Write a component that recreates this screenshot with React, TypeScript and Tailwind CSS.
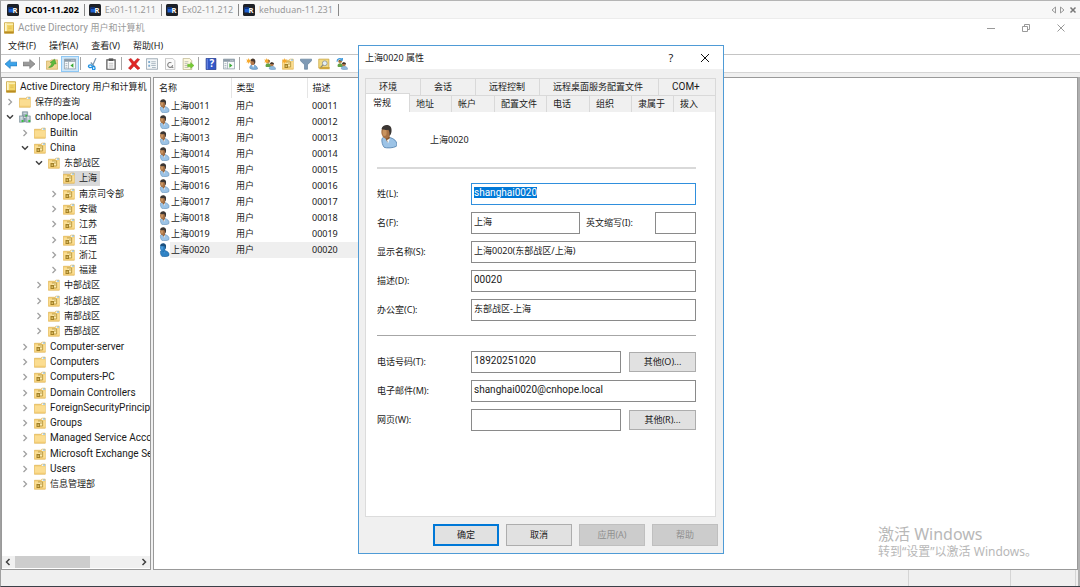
import { useEffect, useRef, type ReactNode } from 'react'
import clsx from 'clsx'

type NodeKind = 'console' | 'folder' | 'domain' | 'ou'

const TREE: { label: string; level: number; kind: NodeKind; open?: boolean; leaf?: boolean; selected?: boolean }[] = [
  { label: 'Active Directory 用户和计算机', level: 0, kind: 'console', leaf: true },
  { label: '保存的查询', level: 1, kind: 'folder' },
  { label: 'cnhope.local', level: 1, kind: 'domain', open: true },
  { label: 'Builtin', level: 2, kind: 'folder' },
  { label: 'China', level: 2, kind: 'ou', open: true },
  { label: '东部战区', level: 3, kind: 'ou', open: true },
  { label: '上海', level: 4, kind: 'ou', leaf: true, selected: true },
  { label: '南京司令部', level: 4, kind: 'ou' },
  { label: '安徽', level: 4, kind: 'ou' },
  { label: '江苏', level: 4, kind: 'ou' },
  { label: '江西', level: 4, kind: 'ou' },
  { label: '浙江', level: 4, kind: 'ou' },
  { label: '福建', level: 4, kind: 'ou' },
  { label: '中部战区', level: 3, kind: 'ou' },
  { label: '北部战区', level: 3, kind: 'ou' },
  { label: '南部战区', level: 3, kind: 'ou' },
  { label: '西部战区', level: 3, kind: 'ou' },
  { label: 'Computer-server', level: 2, kind: 'ou' },
  { label: 'Computers', level: 2, kind: 'folder' },
  { label: 'Computers-PC', level: 2, kind: 'ou' },
  { label: 'Domain Controllers', level: 2, kind: 'ou' },
  { label: 'ForeignSecurityPrincipals', level: 2, kind: 'folder' },
  { label: 'Groups', level: 2, kind: 'ou' },
  { label: 'Managed Service Accounts', level: 2, kind: 'folder' },
  { label: 'Microsoft Exchange Security Groups', level: 2, kind: 'ou' },
  { label: 'Users', level: 2, kind: 'folder' },
  { label: '信息管理部', level: 2, kind: 'ou' },
]

const INDENT = ['pl-[3px]', 'pl-[2px]', 'pl-[17px]', 'pl-[31px]', 'pl-[46px]']

const USERS = ['0011', '0012', '0013', '0014', '0015', '0016', '0017', '0018', '0019', '0020']

const SESSIONS = ['DC01-11.202', 'Ex01-11.211', 'Ex02-11.212', 'kehuduan-11.231']

const MENUS = ['文件(F)', '操作(A)', '查看(V)', '帮助(H)']

const TABS_BACK = [
  { label: '环境', width: 'w-[55px]' },
  { label: '会话', width: 'w-[55px]' },
  { label: '远程控制', width: 'w-[64px]' },
  { label: '远程桌面服务配置文件', width: 'w-[119px]' },
  { label: 'COM+', width: 'flex-1' },
]

const TABS_FRONT = [
  { label: '地址', width: 'w-[42px]' },
  { label: '帐户', width: 'w-[43px]' },
  { label: '配置文件', width: 'w-[52px]' },
  { label: '电话', width: 'w-[43px]' },
  { label: '组织', width: 'w-[42px]' },
  { label: '隶属于', width: 'w-[42px]' },
  { label: '拨入', width: 'flex-1' },
]

const LATIN = 'font-[Roboto,sans-serif] text-[10px]'

// Latin runs are set a size up from the Chinese text beside them
function Mixed({ text }: { text: string }) {
  const cut = text.search(/[\u4e00-\u9fff]/)
  if (cut === 0) return <span>{text}</span>
  if (cut < 0) return <span className={LATIN}>{text}</span>
  return (
    <span className="whitespace-pre">
      <span className={LATIN}>{text.slice(0, cut)}</span>
      {text.slice(cut)}
    </span>
  )
}

function Icon({ children, className = 'size-3' }: { children: ReactNode; className?: string }) {
  return (
    <svg viewBox="0 0 16 16" className={clsx('shrink-0', className)} aria-hidden="true">
      {children}
    </svg>
  )
}

const Scroll = () => (
  <>
    <path d="M2 1h12v14H2z" fill="#f3d66a" stroke="#c19a2e" />
    <path d="M2.500 1.500h2.500v11H2.500z" fill="#fdf6cf" />
    <path d="M5 2h8.500v2H5z" fill="#fbeeb0" />
    <path d="M2 12.500h12V15H2z" fill="#b98c22" />
    <path d="M7 6.500h4.500M7 8.500h4.500" stroke="#e0bd4c" />
  </>
)

const Folder = () => (
  <>
    <path d="M.5 3H9l1.500-1.500h4.500V15H.5z" fill="#f2c766" stroke="#dcae4e" strokeWidth=".8" />
    <path d="M10.300 2h4.300v2h-4.300z" fill="#f1f6f8" />
    <path d="M12.300 2h2.300v1.200h-2.300z" fill="#5fa3cf" />
    <path d="M1 4.500h14v9.800H1z" fill="#fbdd91" />
    <path d="M1 13h14v1.500H1z" fill="#f2cb72" />
  </>
)

const OuFolder = () => (
  <>
    <Folder />
    <path d="M5.300 5.300h6.200V12H8" fill="#fdebb0" stroke="#b8963c" strokeWidth="1.200" />
    <path d="M3.300 8H8v5.300H3.300z" fill="#a17f26" />
    <path d="M4.600 10h2.200v1.600H4.600z" fill="#f5d982" />
    <path d="M8 8h2.500" stroke="#b8963c" strokeWidth="1.200" />
  </>
)

const Domain = () => (
  <>
    <path d="M4.500 1h7v6.500h-7z" fill="#9fb1bd" stroke="#70858f" strokeWidth=".8" />
    <path d="M.5 6.500H6V15H.5zM9.500 6.500H15V15H9.500z" fill="#b4c3cc" stroke="#70858f" strokeWidth=".8" />
    <path d="M6 3h4M2 8.500h2.500M11 8.500h2.500M2 10.500h2.500M11 10.500h2.500" stroke="#eef4f6" />
    <path d="M6.500 9h2.500v6H6.500z" fill="#7d929f" />
    <path d="M3.500 12h2.500v2.500H3.500zM12.500 12h2.500v2.500h-2.500zM8.500 5h2.300v2.300H8.500z" fill="#35c23c" />
  </>
)

function UserIcon({ className, active = false }: { className?: string; active?: boolean }) {
  return (
    <svg viewBox="0 0 18 24" className={clsx('shrink-0', className)} aria-hidden="true">
      <path
        d="M3 14c2-2 4-2 6-1.400 3 .5 7 2 8.300 4.900.5 1.700.4 3.600 0 4.300-3 1.900-9.800 1.900-12 1.100C3.600 21 2.400 17.300 3 14z"
        fill={active ? '#2f82c4' : '#9cc3e6'}
        stroke={active ? '#17578f' : '#5b88b3'}
        strokeWidth=".9"
      />
      <path d="M5.500 12l3 6 2.300-4.500-.6-3.500z" fill={active ? '#226fae' : '#8b5a31'} />
      <path d="M8 15.500l1 3.500 2-5z" fill={active ? '#4a9add' : '#f4f9fd'} />
      <ellipse cx="6.900" cy="7.600" rx="4.600" ry="6.300" fill={active ? '#2d7fc0' : '#a87245'} />
      <ellipse cx="5.600" cy="8" rx="2" ry="3.600" fill={active ? '#4b9bdb' : '#c8935f'} />
      <path
        d="M2.500 4.500C3 1.500 6 .3 8.500.6c3 .4 4.500 3 4 6.400-.2 1.900-.8 3.300-2 4.600.2-2.700 0-4.900-1.200-6.400-2 .3-4.800.4-6.800-.7z"
        fill={active ? '#1c4f7d' : '#3b3633'}
      />
    </svg>
  )
}

const MiniUser = () => (
  <>
    <path d="M5 13.500c0-3 1.500-4.500 4-4.500s6 1.500 6.500 5.500c-3 1.200-8 1.200-10.500-1z" fill="#7fb0da" stroke="#4c7fae" strokeWidth=".7" />
    <path d="M8 9l1.500 4L11 9z" fill="#fff" />
    <ellipse cx="8.800" cy="5.500" rx="2.900" ry="3.800" fill="#b3784a" />
    <path d="M6 4c0-4.500 6.500-4.500 6.500.5 0 2-.5 3-1.500 4 0-2 0-3-1-4z" fill="#4b3a2f" />
  </>
)

const MiniGroup = () => (
  <>
    <path d="M2 11c0-3 1.500-4 3.500-4s4 1.500 4 5H3z" fill="#62a346" />
    <circle cx="5.500" cy="4.800" r="2.400" fill="#c28a55" />
    <path d="M3.200 4.500c0-3 4.800-3 4.800 0z" fill="#7a5a2c" />
    <path d="M7 14.500c0-3 1.500-4 3.500-4s5 1.500 5 4.500c-3 .8-6.500.8-8.500-.5z" fill="#8db8dc" stroke="#5f8eb8" strokeWidth=".6" />
    <circle cx="10.500" cy="8.500" r="2.400" fill="#b3784a" />
    <path d="M8 8c0-3.200 5.400-3.200 5.400.4z" fill="#3e342c" />
  </>
)

const Spark = () => (
  <path d="M3.500 0l.9 2.300L6.800 2 5.400 3.900l1.300 2-2.300-.4L3.500 8l-.8-2.500-2.400.4L1.700 4 .2 2l2.500.3z" fill="#f7a92c" />
)

const Panel = () => (
  <>
    <path d="M.5 1.500h15v13H.5z" fill="#f7f9fa" stroke="#8795a0" />
    <path d="M.5 1.500h15v3.500H.5z" fill="#8b9aa7" />
    <path d="M10 3.200h1.200M12.500 3.200h1.200" stroke="#fff" />
    <path d="M6 5v9.500M2 7.500h2.500M2 10h2.500M2 12.300h2.500" stroke="#9aa8b3" />
  </>
)

const TOOL_GROUPS: { name: string; on?: boolean; art: ReactNode }[][] = [
  [
    { name: '后退', art: <path d="M0 8l7-6v3.500h9v5H7V14z" fill="#3ba3ea" stroke="#1c74b8" strokeWidth=".8" /> },
    { name: '前进', art: <path d="M16 8L9 2v3.500H0v5h9V14z" fill="#9a9a9a" stroke="#6f6f6f" strokeWidth=".8" /> },
  ],
  [
    {
      name: '向上一级',
      art: (
        <>
          <path d="M.5 4h5L7 2.500h8.500V15H.5z" fill="#efd594" stroke="#d0ad5c" />
          <path d="M3.500 12.500c2.500-1.500 3.800-3.500 4.300-5.500L5.500 6 11.500 1.500l2 6.500-2.200-.5c-1 3-4 5.500-7.800 5z" fill="#5dbb3c" stroke="#2f8a26" strokeWidth=".6" />
        </>
      ),
    },
    { name: '显示控制台树', on: true, art: <><Panel /><path d="M12.500 7v6L8.500 10z" fill="#39a935" /></> },
  ],
  [
    {
      name: '剪切',
      art: (
        <>
          <path d="M12 0L7.500 10M9.500 11L5 6" stroke="#7e97ae" strokeWidth="1.600" />
          <ellipse cx="4.500" cy="11" rx="2.600" ry="1.800" fill="none" stroke="#1c8fe0" strokeWidth="1.700" />
          <ellipse cx="9" cy="13.500" rx="1.700" ry="2.200" fill="none" stroke="#1c8fe0" strokeWidth="1.700" />
        </>
      ),
    },
    {
      name: '粘贴',
      art: (
        <>
          <path d="M2.500 2.500h11v12.500h-11z" fill="#fff" stroke="#555" strokeWidth="1.600" />
          <path d="M5 .5h6v3.500H5z" fill="#555" />
          <path d="M5 7h6M5 9.500h6M5 12h6" stroke="#aaa" />
        </>
      ),
    },
  ],
  [
    { name: '删除', art: <path d="M1 2l3-1.500L8 5.300 12.500.500l3 1.500-5 6 5.500 5.500-3 2L8 10.700 3.500 15.500l-3-2L5.500 8z" fill="#e02625" stroke="#b01515" strokeWidth=".6" /> },
    {
      name: '属性',
      art: (
        <>
          <path d="M.5 1h15v14H.5z" fill="#f4f7f9" stroke="#8695a1" />
          <path d="M3 4h2.500v2.500H3zM3 9h2.500v2.500H3z" fill="#7eabce" />
          <path d="M7 5h6M7 7.500h6M7 10h6M8 12.700h5" stroke="#94a5b2" />
        </>
      ),
    },
    {
      name: '刷新',
      art: (
        <>
          <path d="M2 .5h9.500l3 3V15.500H2z" fill="#fafafa" stroke="#b5b5b5" />
          <path d="M11.500 9.500A3.300 3.300 0 1 1 10 6.500M9.500 12l3 1" fill="none" stroke="#858585" strokeWidth="1.500" />
        </>
      ),
    },
    {
      name: '导出列表',
      art: (
        <>
          <path d="M1.500 .5h8.500l3 3v12H1.500z" fill="#fdf9de" stroke="#b8b08a" />
          <path d="M3.500 5h5M3.500 7.500h4M3.500 10h4M3.500 12.500h5" stroke="#a9a9a9" />
          <path d="M7.500 8.300h4V6l4.500 4-4.500 4v-2.300h-4z" fill="#76cc32" stroke="#4d9e1c" strokeWidth=".5" />
        </>
      ),
    },
  ],
  [
    {
      name: '帮助',
      art: (
        <>
          <path d="M1.500 .5h13v15h-13z" fill="#3257c8" stroke="#1c3488" />
          <path d="M3 1v14" stroke="#88a3ee" />
          <text x="9" y="12.500" fontSize="13" fontWeight="700" fill="#fff" textAnchor="middle">?</text>
        </>
      ),
    },
    { name: '操作窗格', art: <><Panel /><path d="M8.500 7v6l4-3z" fill="#39a935" /></> },
  ],
  [
    { name: '新建用户', art: <><MiniUser /><Spark /></> },
    { name: '新建组', art: <><MiniGroup /><Spark /></> },
    { name: '新建组织单位', art: <><OuFolder /><Spark /></> },
    { name: '筛选器', art: <path d="M.5 1.500h15v2L10 9v6H6V9L.5 3.500z" fill="#7f9ab5" stroke="#5b7896" strokeWidth=".8" /> },
    {
      name: '查找',
      art: (
        <>
          <path d="M1 1.500h13.500v12H1z" fill="#f2da80" stroke="#c8a540" />
          <path d="M2 12h13.500v3H2z" fill="#d0a63a" />
          <circle cx="9" cy="7" r="3.200" fill="#e4eff7" stroke="#8a8a80" />
          <path d="M6.800 9.300L3.500 12.500" stroke="#8a8a80" strokeWidth="1.500" />
        </>
      ),
    },
    { name: '添加到组', art: <><MiniGroup /><path d="M1.500 5C1 1 5.500-.5 8.500 2.500M8.500 0v3H5.500" fill="none" stroke="#3d9be0" strokeWidth="1.500" /></> },
  ],
]

const NODE_ART: Record<NodeKind, ReactNode> = {
  console: <Scroll />,
  folder: <Folder />,
  domain: <Domain />,
  ou: <OuFolder />,
}

function Chevron({ open }: { open?: boolean }) {
  return (
    <svg viewBox="0 0 12 12" className="size-3 shrink-0" fill="none" aria-hidden="true">
      {open ? (
        <path d="M3 4.300L6 7.300l3-3" stroke="#404040" strokeWidth="1.500" />
      ) : (
        <path d="M4.500 3L7.500 6l-3 3" stroke="#a0a0a0" strokeWidth="1.300" />
      )}
    </svg>
  )
}

function SessionBar() {
  return (
    <nav className="flex h-[18px] items-center justify-between border-b border-[#ececec] bg-[#f7f7f7] pl-[6px]">
      <div className="flex items-center">
        {SESSIONS.map((name, i) => (
          <button
            key={name}
            type="button"
            className={clsx(
              'mr-[4px] flex h-3 items-center border-r border-[#888] pr-[5px]',
              i === 0 ? 'gap-[6px] font-bold text-black' : 'gap-[4px] text-[#999]',
            )}
          >
            <svg viewBox="0 0 24 24" className="size-3" aria-hidden="true">
              <rect width="24" height="24" rx="3" fill="#1d2026" />
              <path d="M3 7h9v10H3z" fill="#1f5fd0" />
              <path d="M3 7h9v3H3z" fill="#0d2f78" />
              <text x="16" y="17" fontSize="15" fontWeight="700" fill="#fff" textAnchor="middle">R</text>
            </svg>
            {name}
          </button>
        ))}
      </div>
      <svg viewBox="0 0 28 10" className="mr-[2px] h-[10px] w-7" fill="none" aria-hidden="true">
        <path d="M5.500 2v6L2 5zM10.500 2v6L14 5z" stroke="#999" />
        <path d="M20.500 2.500l5 5M25.500 2.500l-5 5" stroke="#777" strokeWidth="1.500" />
      </svg>
    </nav>
  )
}

function TitleBar() {
  return (
    <header className="flex h-[18px] items-center bg-white pl-[2px] text-[#999]">
      <Icon><Scroll /></Icon>
      <h1 className="ml-[3px]"><Mixed text="Active Directory 用户和计算机" /></h1>
      <div className="mr-[14px] ml-auto flex gap-[25px]">
        <button type="button" aria-label="最小化">
          <svg viewBox="0 0 10 10" className="size-[10px]"><path d="M1 5.500h8" stroke="#999" /></svg>
        </button>
        <button type="button" aria-label="还原">
          <svg viewBox="0 0 10 10" className="size-[10px]" fill="none" stroke="#999">
            <path d="M1.500 3.500h5v5h-5zM3.500 3.500v-2h5v5h-2" />
          </svg>
        </button>
        <button type="button" aria-label="关闭">
          <svg viewBox="0 0 10 10" className="size-[10px]" stroke="#999"><path d="M1.500 1.500l7 7M8.500 1.500l-7 7" /></svg>
        </button>
      </div>
    </header>
  )
}

function Toolbar() {
  return (
    <div role="toolbar" className="flex h-[18px] items-center border-b border-[#d5d5d5] bg-white pl-px">
      {TOOL_GROUPS.map((group, g) => (
        <div key={g} className="flex items-center">
          {g > 0 && <span className="mr-[3px] ml-px h-[13px] w-px bg-[#a5a5a5]" />}
          {group.map(({ name, on, art }) => (
            <button
              key={name}
              type="button"
              aria-label={name}
              className={clsx(
                'flex h-4 w-[18px] items-center justify-center border',
                on ? 'border-[#8ec8f5] bg-[#cde6f9]' : 'border-transparent',
              )}
            >
              <Icon>{art}</Icon>
            </button>
          ))}
        </div>
      ))}
    </div>
  )
}

function TreePane() {
  return (
    <aside className="flex w-[150px] flex-col justify-between overflow-hidden border border-[#999] bg-white py-px">
      <ul className="grid h-[413px] auto-rows-fr">
        {TREE.map(({ label, level, kind, open, leaf, selected }) => (
          <li key={label} className={clsx('flex items-center gap-[3px] whitespace-nowrap', INDENT[level])}>
            {level > 0 && (leaf ? <span className="w-3 shrink-0" /> : <Chevron open={open} />)}
            <span
              className={clsx(
                'flex h-full items-center',
                level === 0 ? 'gap-[3px]' : 'gap-[4px]',
                selected && 'bg-[#d9d9d9] pr-[3px]',
              )}
            >
              <Icon>{NODE_ART[kind]}</Icon>
              <Mixed text={label} />
            </span>
          </li>
        ))}
      </ul>
      <div className="flex h-3 items-center bg-[#f0f0f0]">
        <svg viewBox="0 0 12 12" className="size-3" fill="none"><path d="M7.500 3L4.500 6l3 3" stroke="#404040" strokeWidth="1.500" /></svg>
        <span className="ml-px h-3 w-[75px] bg-[#cdcdcd]" />
        <svg viewBox="0 0 12 12" className="ml-auto size-3" fill="none"><path d="M4.500 3l3 3-3 3" stroke="#404040" strokeWidth="1.500" /></svg>
      </div>
    </aside>
  )
}

function UserList() {
  return (
    <section className="flex-1 border border-[#999] bg-white">
      <table className="w-[240px] table-fixed text-left">
        <thead>
          <tr className="h-5">
            <th className="w-[77px] border-r border-[#e5e5e5] pl-[5px] font-normal">名称</th>
            <th className="w-[76px] border-r border-[#e5e5e5] pl-[5px] font-normal">类型</th>
            <th className="pl-[5px] font-normal">描述</th>
          </tr>
        </thead>
        <tbody>
          {USERS.map((id) => {
            const active = id === '0020'
            return (
              <tr key={id} className="h-4">
                <td className="pl-[4px]">
                  <span className="flex items-center">
                    <UserIcon className="h-[14px] w-3" active={active} />
                    <span className={clsx('h-4 flex-1 pl-px leading-4', active && 'bg-[#efefef]')}>上海{id}</span>
                  </span>
                </td>
                <td className={clsx('pl-[5px]', active && 'bg-[#efefef]')}>用户</td>
                <td className={clsx('pl-[5px]', active && 'bg-[#efefef]')}>0{id}</td>
              </tr>
            )
          })}
        </tbody>
      </table>
    </section>
  )
}

const INPUT = 'h-[22px] min-w-0 border bg-white px-[2px] pb-[3px] outline-none'
const BUTTON = 'border border-[#adadad] bg-[#e1e1e1] text-center'

function Field({ id, label, value = '', latin, children }: { id: string; label: string; value?: string; latin?: boolean; children?: ReactNode }) {
  return (
    <div className="flex h-[22px] items-center">
      <label htmlFor={id} className="w-[94px] shrink-0">{label}</label>
      <input id={id} defaultValue={value} className={clsx(INPUT, 'flex-1 border-[#8a8a8a]', latin && LATIN)} />
      {children}
    </div>
  )
}

function PropertiesDialog() {
  const surname = useRef<HTMLInputElement>(null)

  useEffect(() => {
    surname.current?.focus()
    surname.current?.select()
  }, [])

  return (
    <form
      role="dialog"
      aria-label="上海0020 属性"
      className="absolute top-[44px] left-[357px] w-[366px] border border-[#4f9bd6] bg-[#f0f0f0]"
      onSubmit={(e) => e.preventDefault()}
    >
      <div className="flex h-[23px] items-center bg-white pl-[6px]">
        <h2>上海0020 属性</h2>
        <button type="button" aria-label="帮助" className="ml-auto w-5 text-center text-[11px]">?</button>
        <button type="button" aria-label="关闭" className="mr-[13px] ml-[19px]">
          <svg viewBox="0 0 10 10" className="size-[10px]" stroke="#111"><path d="M1 1l8 8M9 1L1 9" /></svg>
        </button>
      </div>

      <div className="pt-[9px] pr-[7px] pl-[6px]">
        <div role="tablist">
          <div className="flex h-[17px] border-t border-l border-[#d9d9d9]">
            {TABS_BACK.map(({ label, width }) => (
              <button key={label} type="button" role="tab" className={clsx('border-r border-[#d9d9d9] pl-[13px] text-left whitespace-nowrap', width)}>
                <Mixed text={label} />
              </button>
            ))}
          </div>
          <div className="flex h-[17px]">
            <button type="button" role="tab" aria-selected="true" className="relative -mt-[2px] w-[45px] border border-b-0 border-[#d9d9d9] bg-white pl-[7px] text-left">
              常规
            </button>
            {TABS_FRONT.map(({ label, width }) => (
              <button key={label} type="button" role="tab" className={clsx('border-t border-r border-[#d9d9d9] pl-[6px] text-left whitespace-nowrap', width)}>
                {label}
              </button>
            ))}
          </div>
        </div>

        <div className="h-[405px] border border-t-0 border-[#dcdcdc] bg-white pr-[19px] pl-[11px]">
          <div className="flex h-[55px] items-center gap-[33px] pl-[2px]">
            <UserIcon className="mt-[-6px] h-[25px] w-[18px]" />
            <span>上海0020</span>
          </div>
          <hr className="border-t-2 border-[#d9d9d9]" />

          <div className="mt-[14px] flex flex-col gap-[7px]">
            <div className="flex h-[22px] items-center">
              <label htmlFor="surname" className="w-[94px]">姓(L):</label>
              <input
                id="surname"
                ref={surname}
                defaultValue="shanghai0020"
                className={clsx(INPUT, LATIN, 'flex-1 border-[#2f8fdd] selection:bg-[#0078d7] selection:text-white')}
              />
            </div>
            <div className="flex h-[22px] items-center">
              <label htmlFor="given" className="w-[94px] shrink-0">名(F):</label>
              <input id="given" defaultValue="上海" className={clsx(INPUT, 'flex-1 border-[#8a8a8a]')} />
              <label htmlFor="initials" className="w-[75px] pl-[6px]">英文缩写(I):</label>
              <input id="initials" className={clsx(INPUT, 'w-[41px] border-[#8a8a8a]')} />
            </div>
            <Field id="display" label="显示名称(S):" value="上海0020(东部战区/上海)" />
            <Field id="desc" label="描述(D):" value="00020" latin />
            <Field id="office" label="办公室(C):" value="东部战区-上海" />
          </div>

          <hr className="mt-[14px] border-[#a6a6a6]" />

          <div className="mt-[15px] flex flex-col gap-[7px]">
            <Field id="phone" label="电话号码(T):" value="18920251020" latin>
              <button type="button" className={clsx(BUTTON, 'ml-2 h-5 w-[67px]')}>其他(O)...</button>
            </Field>
            <Field id="mail" label="电子邮件(M):" value="shanghai0020@cnhope.local" latin />
            <Field id="web" label="网页(W):">
              <button type="button" className={clsx(BUTTON, 'ml-2 h-5 w-[67px]')}>其他(R)...</button>
            </Field>
          </div>
        </div>
      </div>

      <div className="flex justify-end gap-[7px] px-[5px] py-[7px]">
        <button type="submit" className="h-[22px] w-[66px] border-2 border-[#0078d7] bg-[#e1e1e1]">确定</button>
        <button type="button" className={clsx(BUTTON, 'h-[22px] w-[66px]')}>取消</button>
        <button type="button" disabled className="h-[22px] w-[66px] border border-[#bfbfbf] bg-[#cccccc] text-[#8f8f8f]">应用(A)</button>
        <button type="button" disabled className="h-[22px] w-[66px] border border-[#bfbfbf] bg-[#cccccc] text-[#8f8f8f]">帮助</button>
      </div>
    </form>
  )
}

export default function App() {
  return (
    <div className="relative flex min-h-screen flex-col border-t border-b border-l border-t-[#b4b4b4] border-b-[#3c4048] border-l-[#a0a0a0] bg-[#f0f0f0] font-['Noto_Sans','Noto_Sans_CJK_SC',sans-serif] text-[9px] leading-[14px] text-[#1a1a1a]">
      <SessionBar />
      <TitleBar />
      <nav className="flex h-[18px] items-center gap-[13px] border-b border-[#c4c4c4] bg-white pl-[7px]">
        {MENUS.map((m) => (
          <button key={m} type="button">{m}</button>
        ))}
      </nav>
      <Toolbar />

      <main className="mt-1 flex flex-1 gap-[2px] border-r-2 border-[#b0b0b0]">
        <TreePane />
        <UserList />
      </main>

      <footer className="flex h-4 justify-end border-r-2 border-[#b0b0b0]">
        <span className="w-[102px] border-l border-[#d5d5d5]" />
        <span className="w-[66px] border-x border-[#d5d5d5]" />
        <span className="w-[2px]" />
      </footer>

      <div className="pointer-events-none absolute right-[43px] bottom-[26px] text-[#b8b8b8]">
        <p className="text-[16px] leading-5">激活 Windows</p>
        <p className="text-[12px] leading-4">转到“设置”以激活 Windows。</p>
      </div>

      <PropertiesDialog />
    </div>
  )
}
